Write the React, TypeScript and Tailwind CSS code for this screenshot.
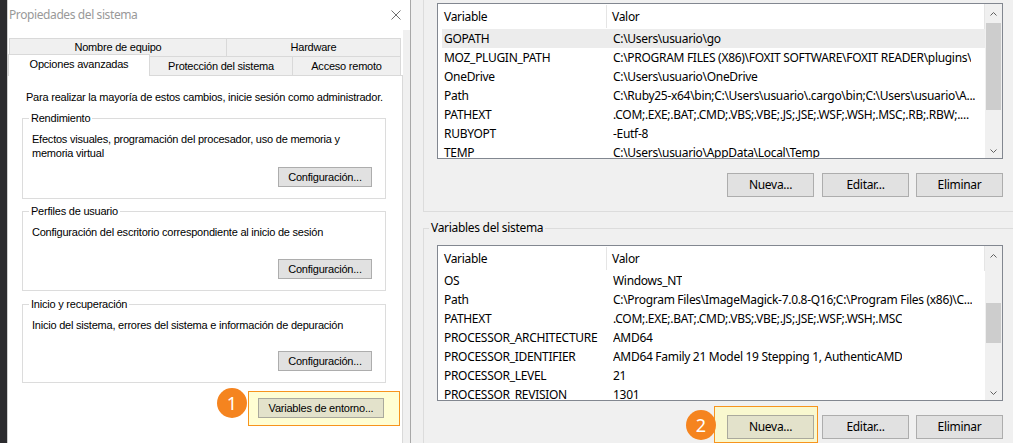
import React from "react";

type Row = [string, string];

const userVars: Row[] = [
  ["GOPATH", "C:\\Users\\usuario\\go"],
  ["MOZ_PLUGIN_PATH", "C:\\PROGRAM FILES (X86)\\FOXIT SOFTWARE\\FOXIT READER\\plugins\\"],
  ["OneDrive", "C:\\Users\\usuario\\OneDrive"],
  ["Path", "C:\\Ruby25-x64\\bin;C:\\Users\\usuario\\.cargo\\bin;C:\\Users\\usuario\\A..."],
  ["PATHEXT", ".COM;.EXE;.BAT;.CMD;.VBS;.VBE;.JS;.JSE;.WSF;.WSH;.MSC;.RB;.RBW;...."],
  ["RUBYOPT", "-Eutf-8"],
  ["TEMP", "C:\\Users\\usuario\\AppData\\Local\\Temp"],
];

const systemVars: Row[] = [
  ["OS", "Windows_NT"],
  ["Path", "C:\\Program Files\\ImageMagick-7.0.8-Q16;C:\\Program Files (x86)\\C..."],
  ["PATHEXT", ".COM;.EXE;.BAT;.CMD;.VBS;.VBE;.JS;.JSE;.WSF;.WSH;.MSC"],
  ["PROCESSOR_ARCHITECTURE", "AMD64"],
  ["PROCESSOR_IDENTIFIER", "AMD64 Family 21 Model 19 Stepping 1, AuthenticAMD"],
  ["PROCESSOR_LEVEL", "21"],
  ["PROCESSOR_REVISION", "1301"],
];

function Chevron({ up }: { up?: boolean }) {
  return (
    <svg width="7" height="4" viewBox="0 0 7 4" className="mt-[2px]">
      <polyline
        points={up ? "0.5,3.5 3.5,0.5 6.5,3.5" : "0.5,0.5 3.5,3.5 6.5,0.5"}
        fill="none"
        stroke="#606060"
        strokeWidth="1"
      />
    </svg>
  );
}

function VarList({ rows, thumbTop, thumbHeight }: { rows: Row[]; thumbTop: string; thumbHeight: string }) {
  return (
    <div className="flex h-[156px] w-[566px] border border-[#828790] bg-white">
      <div className="flex flex-1 flex-col overflow-hidden">
        {/* header */}
        <div className="flex h-[25px] shrink-0 items-center border-r border-[#e5e5e5]">
          <div className="flex h-[23px] w-[169px] items-center border-r border-[#e5e5e5] pl-[6px]">Variable</div>
          <div className="pl-[5px]">Valor</div>
        </div>
        {rows.map(([name, value], i) => (
          <div
            key={name}
            className={
              i === 0 && rows === userVars
                ? "ml-[4px] flex h-[19px] shrink-0 items-center bg-[#ececec]"
                : "ml-[4px] flex h-[19px] shrink-0 items-center"
            }
          >
            <div className="w-[171px] shrink-0 whitespace-nowrap pl-[2px]">{name}</div>
            <div className="overflow-hidden whitespace-nowrap">{value}</div>
          </div>
        ))}
      </div>
      {/* scrollbar */}
      <div className="flex w-[17px] shrink-0 flex-col bg-[#f0f0f0]">
        <div className="flex h-[17px] items-center justify-center">
          <Chevron up />
        </div>
        <div className="flex-1">
          <div className={`mx-[1px] bg-[#cdcdcd] ${thumbTop} ${thumbHeight}`} />
        </div>
        <div className="flex h-[17px] items-center justify-center">
          <Chevron />
        </div>
      </div>
    </div>
  );
}

function WinButton({ label, tinted }: { label: string; tinted?: boolean }) {
  return (
    <button
      className={
        tinted
          ? "flex h-[24px] w-[87px] items-center justify-center border border-[#aaa99d] bg-[#e3e2cb]"
          : "flex h-[24px] w-[87px] items-center justify-center border border-[#adadad] bg-[#e1e1e1]"
      }
    >
      {label}
    </button>
  );
}

function Badge({ n }: { n: string }) {
  return (
    <div className="flex h-[30px] w-[30px] items-center justify-center rounded-full bg-[#f5841f] font-['Noto_Sans',sans-serif] text-[18px] tracking-normal text-white">
      {n}
    </div>
  );
}

function GroupBox({ title, text, gapButton }: { title: string; text: React.ReactNode; gapButton: string }) {
  return (
    <fieldset className="ml-[14px] mr-[16px] flex flex-col border border-[#dcdcdc] pb-[11px]">
      <legend className="ml-[6px] px-[2px] leading-[13px]">{title}</legend>
      <div className="mt-[7px] pl-[9px] leading-[14px]">{text}</div>
      <button
        className={`${gapButton} mr-[13px] flex h-[20px] w-[94px] items-center justify-center self-end border border-[#adadad] bg-[#e1e1e1]`}
      >
        Configuración...
      </button>
    </fieldset>
  );
}

export default function App() {
  return (
    <div className="flex h-[443px] w-[1013px] overflow-hidden bg-[#f0f0f0]">
      {/* background behind the dialog */}
      <div className="w-[7px] shrink-0 bg-[#2b2b2e]" />

      {/* Propiedades del sistema */}
      <div className="flex w-[404px] shrink-0 flex-col border-l border-r border-l-[#cfcfcf] border-r-[#a8a8a8] bg-white font-['Liberation_Sans',Arial,sans-serif] text-[11px] tracking-[-0.22px] text-black">
        <div className="flex h-[30px] shrink-0 items-center justify-between pl-[1px] pr-[9px]">
          <span className="font-['Noto_Sans',sans-serif] text-[12px] tracking-[-0.4px] text-[#999999]">
            Propiedades del sistema
          </span>
          <svg width="10" height="10" viewBox="0 0 10 10">
            <path d="M0.5 0.5 L9.5 9.5 M9.5 0.5 L0.5 9.5" stroke="#707070" strokeWidth="1" />
          </svg>
        </div>

        <div className="flex flex-1">
          <div className="flex w-[395px] shrink-0 flex-col pt-[8px]">
            {/* tabs */}
            <div className="flex h-[18px] pl-[1px]">
              <div className="flex w-[218px] items-center justify-center border-l border-r border-t border-[#d9d9d9] bg-[#f0f0f0]">
                Nombre de equipo
              </div>
              <div className="-ml-px flex w-[175px] items-center justify-center border-l border-r border-t border-[#d9d9d9] bg-[#f0f0f0]">
                Hardware
              </div>
            </div>
            <div className="flex h-[19px]">
              <div className="relative z-10 -mt-[2px] flex h-[22px] w-[142px] items-center justify-center border-l border-r border-t border-[#d9d9d9] bg-white pb-[3px]">
                Opciones avanzadas
              </div>
              <div className="-ml-px flex w-[144px] items-center justify-center border-l border-r border-t border-[#d9d9d9] bg-[#f0f0f0]">
                Protección del sistema
              </div>
              <div className="-ml-px flex w-[109px] items-center justify-center border-l border-r border-t border-[#d9d9d9] bg-[#f0f0f0]">
                Acceso remoto
              </div>
            </div>

            {/* tab page */}
            <div className="flex flex-1 flex-col border-r border-t border-[#d9d9d9] bg-white">
              <div className="ml-[18px] mt-[15px] leading-[13px]">
                Para realizar la mayoría de estos cambios, inicie sesión como administrador.
              </div>

              <div className="mt-[8px]">
                <GroupBox
                  title="Rendimiento"
                  text={
                    <>
                      Efectos visuales, programación del procesador, uso de memoria y
                      <br />
                      memoria virtual
                    </>
                  }
                  gapButton="mt-[7px]"
                />
              </div>
              <div className="mt-[6px]">
                <GroupBox
                  title="Perfiles de usuario"
                  text="Configuración del escritorio correspondiente al inicio de sesión"
                  gapButton="mt-[20px]"
                />
              </div>
              <div className="mt-[7px]">
                <GroupBox
                  title="Inicio y recuperación"
                  text="Inicio del sistema, errores del sistema e información de depuración"
                  gapButton="mt-[19px]"
                />
              </div>

              <div className="mr-[2px] mt-[8px] flex items-start justify-end">
                <div className="-mt-[3px]">
                  <Badge n="1" />
                </div>
                <div className="ml-[1px] border border-[#f7941d] bg-[#fffed3] pb-[7px] pl-[9px] pr-[15px] pt-[6px]">
                  <button className="flex h-[20px] w-[126px] items-center justify-center border border-[#aaa99d] bg-[#e3e2cb]">
                    Variables de entorno...
                  </button>
                </div>
              </div>
            </div>
          </div>
          <div className="flex-1 bg-[#f0f0f0]" />
        </div>
      </div>

      {/* Variables de entorno */}
      <div className="flex flex-1 flex-col overflow-hidden pl-[12px] font-['Noto_Sans',sans-serif] text-[12px] tracking-[-0.3px] text-black">
        <div className="w-[600px] shrink-0 border-b border-l border-[#dcdcdc] pb-[14px] pl-[13px] pt-[3px]">
          <VarList rows={userVars} thumbTop="mt-[2px]" thumbHeight="h-[87px]" />
          <div className="mt-[14px] flex w-[566px] justify-end">
            <div className="mr-[8px]">
              <WinButton label="Nueva..." />
            </div>
            <div className="mr-[7px]">
              <WinButton label="Editar..." />
            </div>
            <WinButton label="Eliminar" />
          </div>
        </div>

        <fieldset className="mt-[8px] w-[600px] shrink-0 border-l border-t border-[#dcdcdc]">
          <legend className="ml-[5px] px-[2px] leading-[16px]">Variables del sistema</legend>
          <div className="ml-[13px] mt-[9px]">
            <VarList rows={systemVars} thumbTop="mt-[40px]" thumbHeight="h-[40px]" />
            <div className="mt-[14px] flex w-[566px] items-start justify-end">
              <div className="relative -mt-[9px] mr-[4px] border border-[#f7941d] bg-[#f9f8cf] pb-[3px] pl-[12px] pr-[3px] pt-[8px]">
                <div className="absolute left-[-29px] top-[3px] z-10">
                  <Badge n="2" />
                </div>
                <WinButton label="Nueva..." tinted />
              </div>
              <div className="mr-[7px]">
                <WinButton label="Editar..." />
              </div>
              <WinButton label="Eliminar" />
            </div>
          </div>
        </fieldset>
      </div>
    </div>
  );
}
